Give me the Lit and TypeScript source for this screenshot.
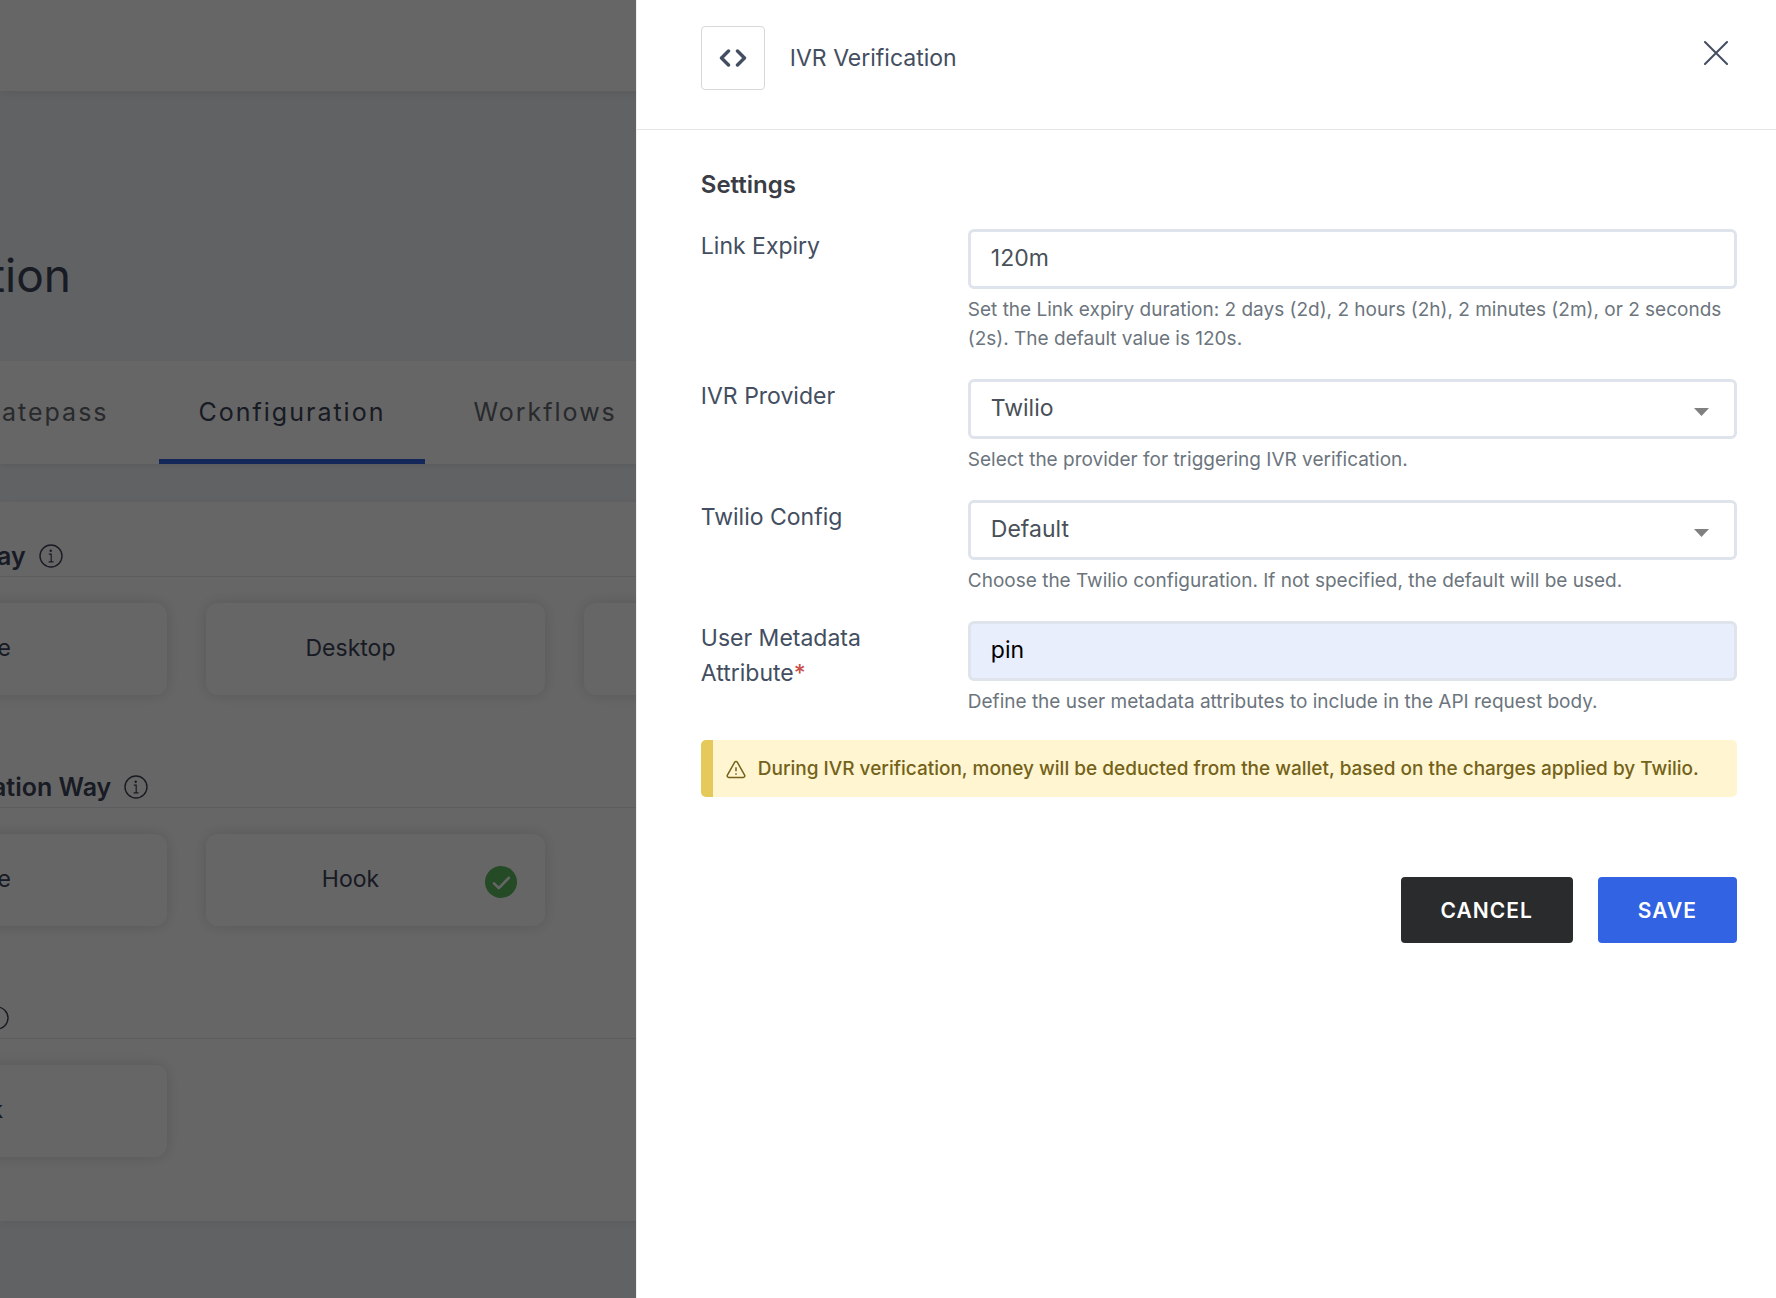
import { LitElement, html, css, svg, nothing } from "lit";
import { customElement, property } from "lit/decorators.js";
import { classMap } from "lit/directives/class-map.js";

interface Choice {
  label: string;
  selected?: boolean;
  edge?: "wide" | "narrow";
}

interface Section {
  title: string;
  shift: "near" | "far" | "icon";
  choices: Choice[];
}

const SECTIONS: Section[] = [
  {
    title: "ay",
    shift: "near",
    choices: [{ label: "e", edge: "wide" }, { label: "Desktop" }, { label: "" }],
  },
  {
    title: "ation Way",
    shift: "far",
    choices: [{ label: "e", edge: "wide" }, { label: "Hook", selected: true }],
  },
  { title: "", shift: "icon", choices: [{ label: "k", edge: "narrow" }] },
];

interface Field {
  id: string;
  label: string;
  kind: "text" | "select";
  value: string;
  help: string;
  required?: boolean;
  autofilled?: boolean;
}

const FIELDS: Field[] = [
  {
    id: "link-expiry",
    label: "Link Expiry",
    kind: "text",
    value: "120m",
    help: "Set the Link expiry duration: 2 days (2d), 2 hours (2h), 2 minutes (2m), or 2 seconds (2s). The default value is 120s.",
  },
  {
    id: "ivr-provider",
    label: "IVR Provider",
    kind: "select",
    value: "Twilio",
    help: "Select the provider for triggering IVR verification.",
  },
  {
    id: "twilio-config",
    label: "Twilio Config",
    kind: "select",
    value: "Default",
    help: "Choose the Twilio configuration. If not specified, the default will be used.",
  },
  {
    id: "user-metadata",
    label: "User Metadata Attribute",
    kind: "text",
    value: "pin",
    required: true,
    autofilled: true,
    help: "Define the user metadata attributes to include in the API request body.",
  },
];

const infoIcon = html`<svg class="info" viewBox="0 0 24 24" aria-hidden="true">
  ${svg`<circle cx="12" cy="12" r="11" fill="none" stroke="currentColor" stroke-width="1.4"/>
  <circle cx="11.7" cy="6.8" r="1.2" fill="currentColor"/>
  <path d="M9.8 10.2h2.4v7.6M9.6 17.9h5" fill="none" stroke="currentColor" stroke-width="1.2"/>`}
</svg>`;

const checkIcon = html`<svg class="check" viewBox="0 0 32 32" aria-hidden="true">
  ${svg`<circle cx="16" cy="16" r="16" fill="#5cb860"/>
  <path d="M9 17.4l4.8 4.8 10-10.4" fill="none" stroke="#fff" stroke-width="2.6" stroke-linecap="round" stroke-linejoin="round"/>`}
</svg>`;

@customElement("config-page")
export class ConfigPage extends LitElement {
  static styles = css`
    :host {
      display: block;
      min-height: 100vh;
      overflow: hidden;
      background: #f1f4f8;
      color: #3c4558;
    }
    .topbar {
      height: 91px;
      background: #fff;
      box-shadow: 0 2px 8px rgba(0, 0, 0, 0.08);
    }
    .title {
      margin: 0 0 0 -10px;
      padding: 154px 0 56px;
      font-size: 46px;
      line-height: 60px;
      font-weight: 400;
      color: #3c4558;
    }
    .tabs {
      display: flex;
      background: #fff;
      box-shadow: 0 2px 4px rgba(0, 0, 0, 0.06);
    }
    .tab {
      padding: 34px 40px 30px;
      border-bottom: 5px solid transparent;
      font-size: 25px;
      line-height: 34px;
      letter-spacing: 2px;
      color: #666a70;
      text-decoration: none;
    }
    .tab.first {
      padding-left: 2px;
      padding-right: 50px;
    }
    .tab.active {
      color: #3c4558;
      border-bottom-color: #3163e2;
    }
    .tab:last-child {
      padding-left: 48px;
    }
    .card {
      margin-top: 38px;
      padding: 34px 0 64px;
      background: #fff;
      box-shadow: 0 2px 8px rgba(0, 0, 0, 0.06);
    }
    .section + .section {
      margin-top: 72px;
    }
    .head {
      display: flex;
      align-items: center;
      gap: 13px;
      height: 40px;
      border-bottom: 1px solid #e6e8ec;
      font-size: 25px;
      line-height: 32px;
      font-weight: 600;
    }
    .heading {
      margin: 0;
      font: inherit;
    }
    .head.near .heading {
      margin-left: -3px;
    }
    .head.far .heading {
      margin-left: -8px;
    }
    .head.icon .info {
      margin-left: -28px;
    }
    .info {
      width: 24px;
      height: 24px;
      flex: none;
    }
    .choices {
      display: grid;
      grid-template-columns: repeat(3, 339px);
      gap: 39px;
      margin: 26px 0 0 -172px;
    }
    .choice {
      display: grid;
      grid-template-columns: 1fr 32px;
      align-items: center;
      height: 92px;
      padding: 0 28px 2px 10px;
      border: 0;
      border-radius: 12px;
      background: #fff;
      box-shadow: 0 0 14px rgba(0, 0, 0, 0.14);
      font: inherit;
      font-size: 23px;
      color: #3c4558;
      text-align: center;
    }
    .choice.wide {
      text-align: right;
      padding-right: 124px;
    }
    .choice.narrow {
      text-align: right;
      padding-right: 132px;
    }
    .check {
      width: 32px;
      height: 32px;
      margin-top: 6px;
    }
  `;

  render() {
    return html`
      <header class="topbar"></header>
      <h1 class="title">tion</h1>
      <nav class="tabs">
        <a class="tab first" href="#gatepass">atepass</a>
        <a class="tab active" href="#configuration">Configuration</a>
        <a class="tab" href="#workflows">Workflows</a>
      </nav>
      <main class="card">
        ${SECTIONS.map(
          (s) => html`<section class="section">
            <div class="head ${s.shift}">
              <h2 class="heading">${s.title}</h2>
              ${infoIcon}
            </div>
            <div class="choices">
              ${s.choices.map(
                (c) => html`<button class="choice ${c.edge ?? ""}" type="button">
                  <span>${c.label}</span>
                  ${c.selected ? checkIcon : nothing}
                </button>`,
              )}
            </div>
          </section>`,
        )}
      </main>
    `;
  }
}

@customElement("form-field")
export class FormField extends LitElement {
  @property({ attribute: false }) field!: Field;

  static styles = css`
    :host {
      display: grid;
      grid-template-columns: 243px minmax(0, 1fr);
      column-gap: 24px;
    }
    .label {
      font-size: 23px;
      line-height: 35px;
      padding-right: 24px;
      color: #434e61;
    }
    .star {
      color: #c9504a;
      font-weight: 500;
    }
    .control {
      position: relative;
    }
    .input {
      display: block;
      box-sizing: border-box;
      width: 100%;
      height: 60px;
      margin: 0;
      padding: 0 20px 2px;
      border: 3px solid #dee3ec;
      border-radius: 6px;
      background: #fff;
      font: inherit;
      font-size: 23px;
      color: #495057;
      appearance: none;
      outline: none;
    }
    .input.autofilled {
      background: #e8eefc;
      color: #000;
    }
    .caret {
      position: absolute;
      right: 28px;
      top: 29px;
      width: 15px;
      height: 8px;
      fill: #808080;
      pointer-events: none;
    }
    .help {
      margin: 6px 0 0;
      font-size: 19px;
      line-height: 29px;
      color: #6c757d;
    }
  `;

  render() {
    const f = this.field;
    const cls = classMap({ input: true, autofilled: !!f.autofilled });
    return html`
      <label class="label" for=${f.id}
        >${f.label}${f.required ? html`<span class="star">*</span>` : nothing}</label
      >
      <div>
        <div class="control">
          ${f.kind === "select"
            ? html`<select class=${cls} id=${f.id}>
                  <option>${f.value}</option>
                </select>
                <svg class="caret" viewBox="0 0 15 8" aria-hidden="true"><path d="M0 0h15L7.500 8z" /></svg>`
            : html`<input class=${cls} id=${f.id} type="text" .value=${f.value} />`}
        </div>
        <p class="help">${f.help}</p>
      </div>
    `;
  }
}

@customElement("app-root")
export class AppRoot extends LitElement {
  static styles = css`
    :host {
      display: block;
      position: relative;
      min-height: 100vh;
      overflow: hidden;
      font-family: Inter, "Liberation Sans", sans-serif;
    }
    .backdrop {
      position: absolute;
      inset: 0;
      background: rgba(0, 0, 0, 0.6);
    }
    .drawer {
      position: absolute;
      top: 0;
      right: 0;
      bottom: 0;
      box-sizing: border-box;
      width: 64.2%;
      border-left: 1px solid #eee;
      background: #fff;
    }
    .header {
      display: flex;
      align-items: flex-start;
      padding: 26px 44px 39px 64px;
      border-bottom: 1px solid #e6e6e6;
    }
    .badge {
      display: grid;
      place-items: center;
      box-sizing: border-box;
      width: 64px;
      height: 64px;
      border: 1px solid #d8d8d8;
      border-radius: 4px;
    }
    .badge-icon {
      width: 28px;
      height: 18px;
    }
    .title {
      flex: 1;
      margin: 0 0 0 25px;
      font-size: 23px;
      line-height: 64px;
      font-weight: 400;
      color: #434e61;
    }
    .close {
      display: grid;
      place-items: center;
      width: 32px;
      height: 32px;
      margin-top: 11px;
      padding: 0;
      border: 0;
      background: none;
      color: #434e61;
    }
    .close-icon {
      width: 24px;
      height: 24px;
    }
    .form {
      padding: 37px 39px 40px 64px;
    }
    .settings {
      margin: 0 0 26px;
      font-size: 24px;
      line-height: 36px;
      font-weight: 600;
      color: #3a3d45;
    }
    .fields {
      display: grid;
      row-gap: 26px;
    }
    .alert {
      display: flex;
      align-items: center;
      gap: 12px;
      margin-top: 24px;
      padding: 14px 12px 14px 13px;
      border-left: 12px solid #e5ca5b;
      border-radius: 5px;
      background: #fff5d1;
      color: #736218;
      font-size: 19px;
      line-height: 29px;
      font-weight: 500;
    }
    .alert-icon {
      flex: none;
      width: 20px;
      height: 20px;
    }
    .actions {
      display: flex;
      justify-content: flex-end;
      gap: 25px;
      margin-top: 80px;
    }
    .button {
      height: 66px;
      padding: 0 40px;
      border: 0;
      border-radius: 4px;
      background: #3163e2;
      color: #fff;
      font: inherit;
      font-size: 21px;
      font-weight: 600;
      letter-spacing: 1px;
    }
    .button.dark {
      background: #2a2b2d;
    }
  `;

  render() {
    return html`
      <config-page></config-page>
      <div class="backdrop"></div>
      <aside class="drawer">
        <header class="header">
          <span class="badge">
            <svg class="badge-icon" viewBox="0 0 28 18" aria-hidden="true">
              <path d="M9.500 2L2.500 9l7 7M18.500 2l7 7-7 7" fill="none" stroke="#434e61" stroke-width="3.400" stroke-linecap="round" stroke-linejoin="round" />
            </svg>
          </span>
          <h2 class="title">IVR Verification</h2>
          <button class="close" type="button" aria-label="Close">
            <svg class="close-icon" viewBox="0 0 24 24" aria-hidden="true">
              <path d="M1 1l22 22M23 1L1 23" fill="none" stroke="currentColor" stroke-width="2" stroke-linecap="round" />
            </svg>
          </button>
        </header>
        <form class="form" @submit=${(e: Event) => e.preventDefault()}>
          <h3 class="settings">Settings</h3>
          <div class="fields">${FIELDS.map((f) => html`<form-field .field=${f}></form-field>`)}</div>
          <div class="alert" role="note">
            <svg class="alert-icon" viewBox="0 0 20 20" aria-hidden="true">
              <path d="M8.700 3.200L1.400 16.200a1.500 1.500 0 0 0 1.300 2.200h14.600a1.500 1.500 0 0 0 1.300-2.200L11.300 3.200a1.500 1.500 0 0 0-2.600 0z" fill="none" stroke="currentColor" stroke-width="1.500" stroke-linejoin="round" />
              <path d="M10 8.200v4M10 14.200v1.600" fill="none" stroke="currentColor" stroke-width="1.500" />
            </svg>
            <span>During IVR verification, money will be deducted from the wallet, based on the charges applied by Twilio.</span>
          </div>
          <div class="actions">
            <button class="button dark" type="button">CANCEL</button>
            <button class="button" type="submit">SAVE</button>
          </div>
        </form>
      </aside>
    `;
  }
}
